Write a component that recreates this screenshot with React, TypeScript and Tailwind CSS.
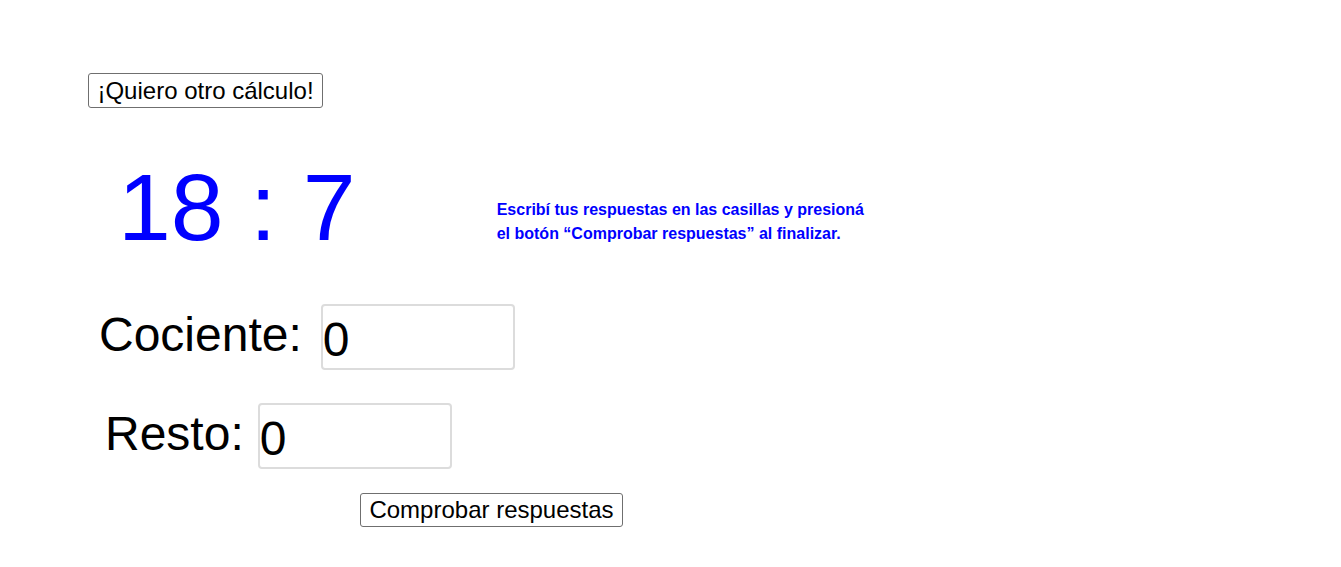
import { useState } from "react";

const FONT = { fontFamily: '"Liberation Sans", Arial, sans-serif' };

function AnswerRow({
  label,
  value,
  onChange,
  labelClass,
}: {
  label: string;
  value: string;
  onChange: (v: string) => void;
  labelClass: string;
}) {
  return (
    <div className="flex items-start">
      <span className={`mt-[7px] text-[48px] leading-none text-black ${labelClass}`}>{label}</span>
      <input
        value={value}
        onChange={(e) => onChange(e.target.value)}
        className="h-[66px] w-[194px] rounded-[4px] border-2 border-[#dcdcdc] bg-white pl-0 pt-[4px] text-[48px] leading-none text-black outline-none"
        style={FONT}
      />
    </div>
  );
}

export default function App() {
  const [cociente, setCociente] = useState("0");
  const [resto, setResto] = useState("0");

  return (
    <div className="h-[567px] w-full overflow-hidden bg-white pt-[73px]" style={FONT}>
      <button
        type="button"
        className="ml-[88px] flex h-[35px] w-[235px] items-center justify-center rounded-[3px] border border-[#6f6f6f] bg-white text-[24px] leading-none text-black"
      >
        ¡Quiero otro cálculo!
      </button>

      <div className="mt-[52px] flex h-[95px] items-start">
        <span className="ml-[118px] text-[95px] leading-none text-[#0000ff]">18 : 7</span>
        <p className="ml-[141px] mt-[38px] text-[16px] font-bold leading-[24px] text-[#0000ff]">
          Escribí tus respuestas en las casillas y presioná
          <br />
          el botón “Comprobar respuestas” al finalizar.
        </p>
      </div>

      <div className="mt-[49px] flex flex-col gap-[33px]">
        <AnswerRow label="Cociente:" value={cociente} onChange={setCociente} labelClass="ml-[99px] mr-[19px]" />
        <AnswerRow label="Resto:" value={resto} onChange={setResto} labelClass="ml-[105px] mr-[14px]" />
      </div>

      <button
        type="button"
        className="ml-[360px] mt-[24px] flex h-[34px] w-[263px] items-center justify-center rounded-[3px] border border-[#6f6f6f] bg-white text-[24px] leading-none text-black"
      >
        Comprobar respuestas
      </button>
    </div>
  );
}
